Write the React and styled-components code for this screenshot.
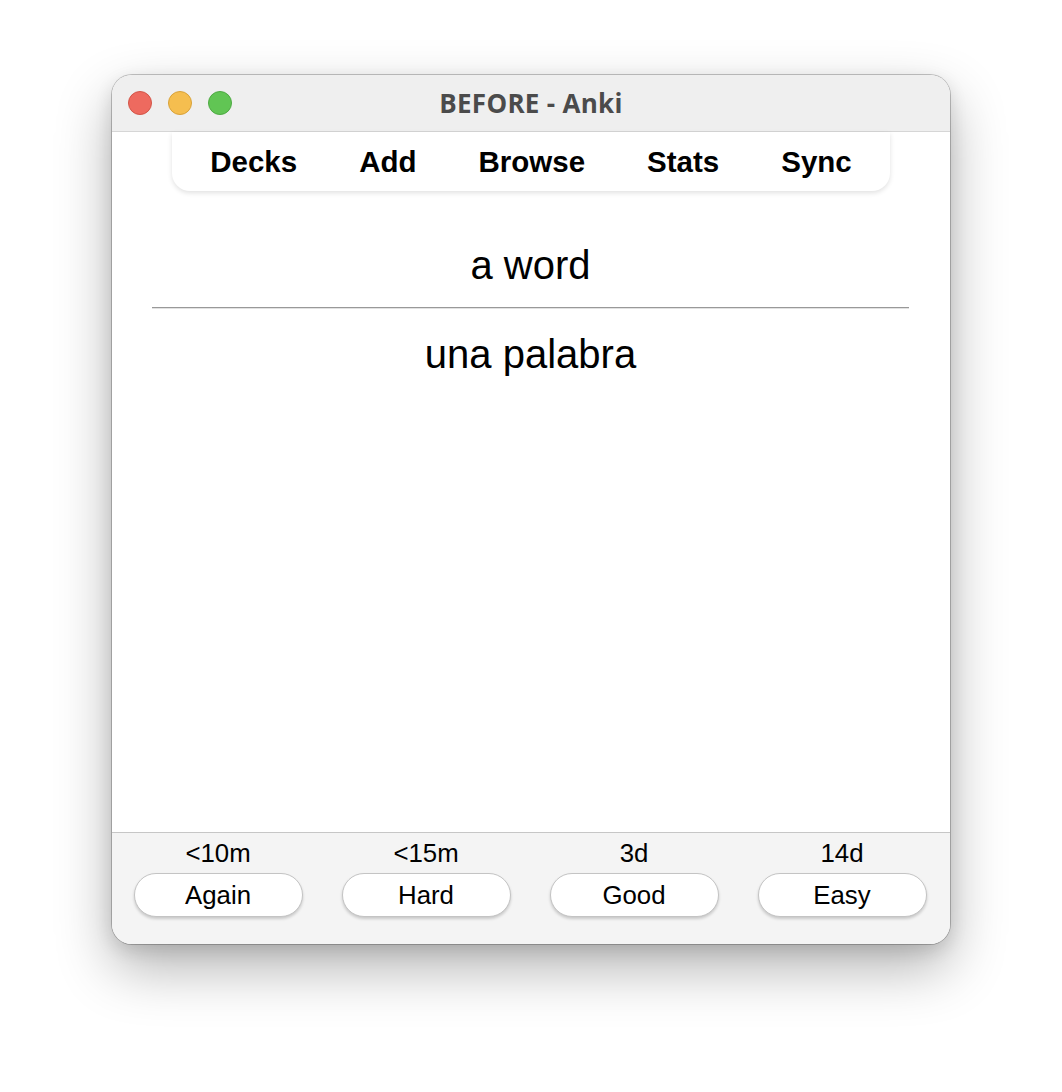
import styled, { createGlobalStyle } from 'styled-components';

const GlobalStyle = createGlobalStyle`
  html, body {
    margin: 0;
    padding: 0;
    background: #ffffff;
  }
  body {
    font-family: "Liberation Sans", Arial, sans-serif;
  }
`;

const Page = styled.div`
  width: 1062px;
  height: 1092px;
  padding: 75px 0 0 112px;
  box-sizing: border-box;
`;

const Window = styled.div`
  width: 838px;
  height: 869px;
  border-radius: 20px;
  overflow: hidden;
  background: #ffffff;
  display: flex;
  flex-direction: column;
  box-shadow: 0 0 0 1px rgba(0, 0, 0, 0.22), 0 24px 56px rgba(0, 0, 0, 0.3), 0 6px 18px rgba(0, 0, 0, 0.12);
`;

const TitleBar = styled.div`
  height: 57px;
  flex-shrink: 0;
  background: #efefef;
  border-bottom: 1px solid #d6d6d6;
  box-sizing: border-box;
  display: grid;
  grid-template-columns: 1fr auto 1fr;
  align-items: center;
  padding: 0 16px;
`;

const Lights = styled.div`
  display: flex;
  gap: 16px;
`;

const Light = styled.span`
  width: 24px;
  height: 24px;
  border-radius: 50%;
  box-sizing: border-box;
  background: ${p => p.$fill};
  border: 1px solid ${p => p.$edge};
`;

const Title = styled.div`
  font-family: "Open Sans", "Liberation Sans", sans-serif;
  font-weight: 700;
  font-size: 26px;
  color: #4b4b4b;
  letter-spacing: 0.3px;
`;

const Main = styled.div`
  flex: 1;
  display: flex;
  flex-direction: column;
  align-items: center;
`;

const Toolbar = styled.nav`
  width: 718px;
  height: 59px;
  box-sizing: border-box;
  background: #ffffff;
  border-radius: 0 0 18px 18px;
  box-shadow: 0 2px 5px rgba(0, 0, 0, 0.12);
  display: flex;
  align-items: center;
  justify-content: center;
  gap: 62px;
`;

const NavLink = styled.span`
  font-weight: 700;
  font-size: 29.5px;
  color: #000;
`;

const Card = styled.div`
  align-self: stretch;
  margin: 51px 41px 0 40px;
  text-align: center;
  font-size: 40px;
  color: #000;
`;

const Field = styled.div`
  line-height: 46px;
`;

const Divider = styled.hr`
  margin: 19px 0 22px;
  border: 0;
  border-top: 1px solid #999999;
  border-bottom: 1px solid #e2e2e2;
`;

const AnswerBar = styled.div`
  height: 112px;
  flex-shrink: 0;
  box-sizing: border-box;
  background: #f4f4f4;
  border-top: 1px solid #c6c6c6;
  display: grid;
  grid-template-columns: repeat(4, 208px);
  padding: 6px 0 0 2px;
`;

const Choice = styled.div`
  display: flex;
  flex-direction: column;
  align-items: center;
  gap: 5px;
`;

const Due = styled.div`
  font-size: 25.8px;
  line-height: 29px;
  color: #000;
`;

const Ease = styled.button`
  width: 169px;
  height: 44px;
  border-radius: 22px;
  background: #ffffff;
  border: 1px solid #c4c4c4;
  box-shadow: 0 2px 3px rgba(0, 0, 0, 0.18);
  font-family: "Liberation Sans", Arial, sans-serif;
  font-size: 25.8px;
  color: #000;
  padding: 0;
`;

const links = ['Decks', 'Add', 'Browse', 'Stats', 'Sync'];

const answers = [
  { due: '<10m', label: 'Again' },
  { due: '<15m', label: 'Hard' },
  { due: '3d', label: 'Good' },
  { due: '14d', label: 'Easy' },
];

export default function App() {
  return (
    <>
      <GlobalStyle />
      <Page>
        <Window>
          <TitleBar>
            <Lights>
              <Light $fill="#ee6a5f" $edge="#d25548" />
              <Light $fill="#f5be4f" $edge="#d8a23a" />
              <Light $fill="#61c554" $edge="#4ea943" />
            </Lights>
            <Title>BEFORE - Anki</Title>
            <span />
          </TitleBar>
          <Main>
            <Toolbar>
              {links.map(l => <NavLink key={l}>{l}</NavLink>)}
            </Toolbar>
            <Card>
              <Field>a word</Field>
              <Divider />
              <Field>una palabra</Field>
            </Card>
          </Main>
          <AnswerBar>
            {answers.map(a => (
              <Choice key={a.label}>
                <Due>{a.due}</Due>
                <Ease>{a.label}</Ease>
              </Choice>
            ))}
          </AnswerBar>
        </Window>
      </Page>
    </>
  );
}
